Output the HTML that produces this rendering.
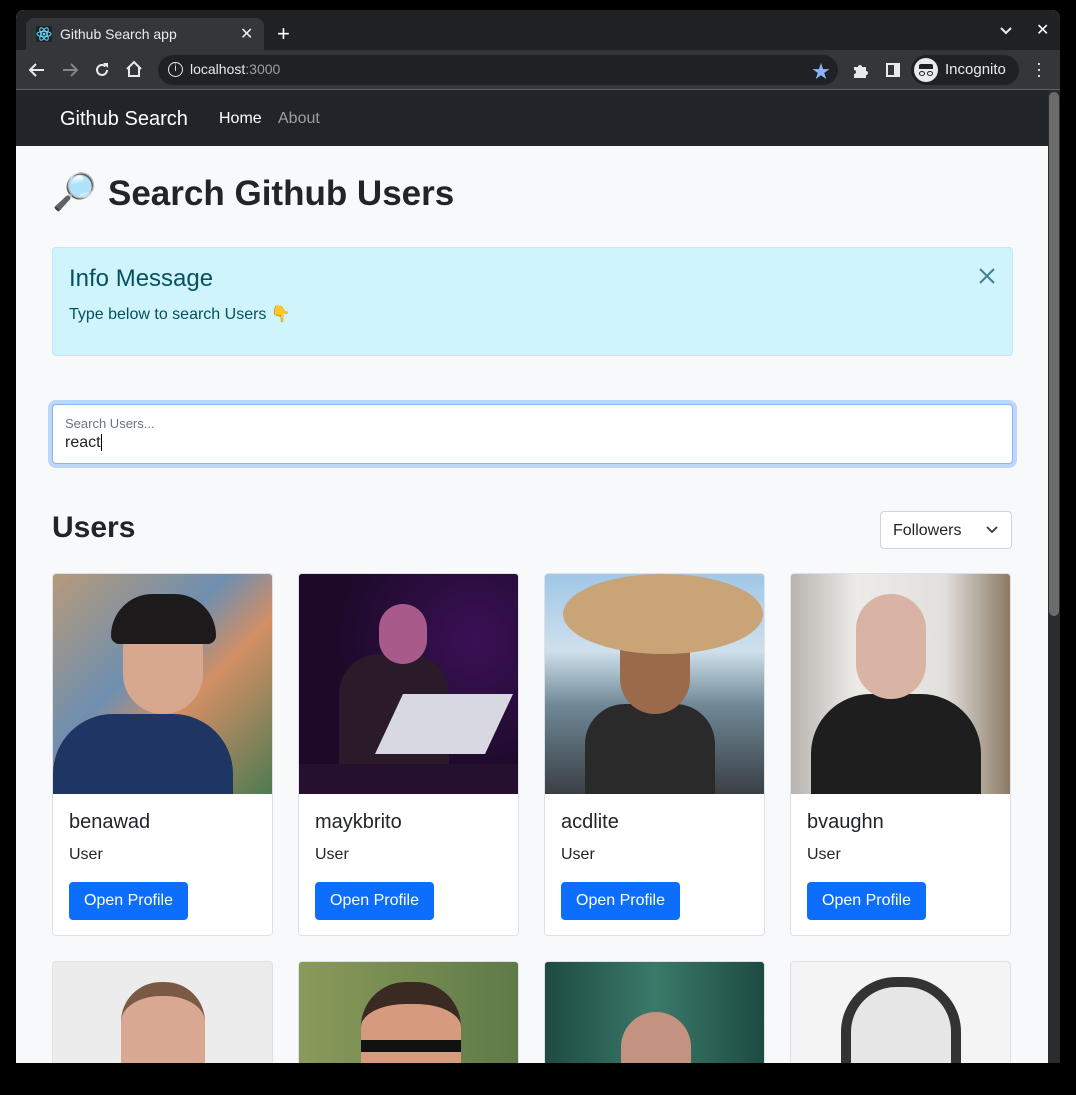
<!DOCTYPE html>
<html><head><meta charset="utf-8"><style>
*{box-sizing:border-box;margin:0;padding:0}
body{width:1076px;height:1095px;background:#000;position:relative;overflow:hidden;font-family:"Liberation Sans","Noto Sans CJK JP",sans-serif}
.a{position:absolute}
.win{left:16px;top:10px;width:1044px;height:1053px;background:#f8f9fa;border-radius:8px 8px 0 0;overflow:hidden}
.tabbar{left:0;top:0;width:1044px;height:40px;background:#202124}
.tab{left:10px;top:8px;width:238px;height:32px;background:#35363a;border-radius:8px 8px 0 0;color:#e8eaed;font-size:14px}
.tool{left:0;top:40px;width:1044px;height:40px;background:#35363a;border-bottom:1px solid #5f6368}
.url{left:142px;top:5px;width:680px;height:30px;background:#202124;border-radius:15px;color:#e8eaed;font-size:14px}
.nav{left:0;top:80px;width:1032px;height:56px;background:#212529}
.sb{left:1032px;top:80px;width:12px;height:973px;background:#2b2c2e}
.card{width:221px;height:363px;background:#fff;border:1px solid #dee2e6;border-radius:4px;overflow:hidden}
.img{left:0;top:0;width:219px;height:220px;overflow:hidden}
.nm{left:16px;top:237px;font-size:20px;color:#212529}
.ty{left:16px;top:272px;font-size:16px;color:#212529}
.btn{left:16px;top:308px;width:119px;height:38px;background:#0d6efd;border-radius:4px;color:#fff;font-size:16px;text-align:center;line-height:38px}
.card2{width:221px;height:120px;border:1px solid #dee2e6;border-radius:4px 4px 0 0;overflow:hidden}
</style></head><body>
<div class="a win">
 <div class="a tabbar">
  <div class="a tab">
   <svg class="a" style="left:10px;top:8px" width="16" height="16" viewBox="0 0 16 16"><rect width="16" height="16" fill="#20232a"/><g fill="none" stroke="#61dafb" stroke-width="1"><ellipse cx="8" cy="8" rx="7" ry="2.7"/><ellipse cx="8" cy="8" rx="7" ry="2.7" transform="rotate(60 8 8)"/><ellipse cx="8" cy="8" rx="7" ry="2.7" transform="rotate(120 8 8)"/></g><circle cx="8" cy="8" r="1.3" fill="#61dafb"/></svg>
   <div class="a" style="left:34px;top:8px">Github Search app</div>
   <div class="a" style="left:214px;top:6px;font-size:16px">✕</div>
  </div>
  <div class="a" style="left:261px;top:13px;color:#fff;font-size:22px;line-height:22px">+</div>
  <svg class="a" style="left:983px;top:16px" width="14" height="10"><path d="M2 2l5 5 5-5" stroke="#e8eaed" stroke-width="2" fill="none"/></svg>
  <div class="a" style="left:1020px;top:10px;color:#fff;font-size:16px">✕</div>
 </div>
 <div class="a tool">
  <svg class="a" style="left:12px;top:12px" width="18" height="16"><path d="M16 8H3M8 2L2 8l6 6" stroke="#e8eaed" stroke-width="2" fill="none"/></svg>
  <svg class="a" style="left:45px;top:12px" width="18" height="16"><path d="M2 8h13M10 2l6 6-6 6" stroke="#80868b" stroke-width="2" fill="none"/></svg>
  <svg class="a" style="left:77px;top:11px" width="18" height="18"><path d="M14 9a5 5 0 1 1-1.5-3.6" stroke="#e8eaed" stroke-width="2" fill="none"/><path d="M10 2h5v5z" fill="#e8eaed"/></svg>
  <svg class="a" style="left:109px;top:10px" width="18" height="18"><path d="M2 9L9 2l7 7M4 7v9h10V7" stroke="#e8eaed" stroke-width="2" fill="none"/></svg>
  <div class="a url">
   <div class="a" style="left:10px;top:7px;width:15px;height:15px;border:1.5px solid #e8eaed;border-radius:50%;font-size:10px;text-align:center;line-height:12px">i</div>
   <div class="a" style="left:32px;top:6px">localhost<span style="color:#9aa0a6">:3000</span></div>
   <div class="a" style="left:654px;top:3px;color:#8ab4f8;font-size:18px">★</div>
  </div>
  <svg class="a" style="left:836px;top:12px" width="17" height="17"><path d="M2 5h4a2 2 0 1 1 4 0h4v4a2 2 0 1 1 0 4v3H2v-4a2 2 0 1 0 0-4z" fill="#e8eaed"/></svg>
  <div class="a" style="left:870px;top:13px;width:14px;height:14px;border:2px solid #e8eaed;border-right-width:6px"></div>
  <div class="a" style="left:895px;top:5px;width:108px;height:30px;background:#202124;border-radius:15px">
   <div class="a" style="left:3px;top:3px;width:24px;height:24px;background:#e8eaed;border-radius:50%"><div class="a" style="left:5px;top:6px;width:14px;height:5px;background:#202124;border-radius:2px 2px 0 0"></div><div class="a" style="left:5px;top:13px;width:6px;height:5px;border:1.5px solid #202124;border-radius:50%"></div><div class="a" style="left:13px;top:13px;width:6px;height:5px;border:1.5px solid #202124;border-radius:50%"></div></div>
   <div class="a" style="left:34px;top:6px;color:#e8eaed;font-size:15px">Incognito</div>
  </div>
  <div class="a" style="left:1020px;top:10px;color:#e8eaed;font-size:18px;line-height:6px;width:4px">·<br>·<br>·</div>
 </div>
 <div class="a nav">
  <div class="a" style="left:44px;top:18px;color:#fff;font-size:20px">Github Search</div>
  <div class="a" style="left:203px;top:20px;color:#fff;font-size:16px">Home</div>
  <div class="a" style="left:262px;top:20px;color:rgba(255,255,255,.55);font-size:16px">About</div>
 </div>
 <div class="a sb"><div class="a" style="left:1px;top:2px;width:10px;height:524px;background:#6b6b6b;border-radius:5px"></div></div>

 <div class="a" style="left:36px;top:160px;font-size:36px;line-height:44px">🔎</div>
 <div class="a" style="left:92px;top:164px;font-size:35px;font-weight:bold;color:#212529">Search Github Users</div>

 <div class="a" style="left:36px;top:237px;width:961px;height:109px;background:#cff4fc;border:1px solid #b6effb;border-radius:4px">
  <div class="a" style="left:16px;top:17px;font-size:24px;color:#055160">Info Message</div>
  <div class="a" style="left:16px;top:56px;font-size:16px;color:#055160">Type below to search Users 👇</div>
  <svg class="a" style="left:926px;top:20px" width="16" height="16"><path d="M1 1l14 14M15 1L1 15" stroke="#055160" stroke-width="2" opacity=".7"/></svg>
 </div>

 <div class="a" style="left:36px;top:394px;width:961px;height:60px;background:#fff;border:1px solid #86b7fe;border-radius:4px;box-shadow:0 0 0 4px rgba(13,110,253,.25)">
  <div class="a" style="left:12px;top:11px;font-size:13px;color:#6c757d">Search Users...</div>
  <div class="a" style="left:12px;top:29px;font-size:16px;color:#212529">react<span style="border-left:1px solid #000"></span></div>
 </div>

 <div class="a" style="left:36px;top:501px;font-size:30px;font-weight:bold;color:#212529">Users</div>
 <div class="a" style="left:864px;top:501px;width:132px;height:38px;background:#fff;border:1px solid #ced4da;border-radius:4px">
  <div class="a" style="left:12px;top:10px;font-size:16px;color:#212529">Followers</div>
  <svg class="a" style="left:105px;top:14px" width="12" height="8"><path d="M1 1l5 5 5-5" stroke="#343a40" stroke-width="1.8" fill="none"/></svg>
 </div>

 <div class="a card" style="left:36px;top:563px">
  <div class="a img" style="background:linear-gradient(135deg,#b79a7a,#6f8fb0 40%,#d38f65 60%,#4e7a52)">
   <div class="a" style="left:0;top:140px;width:180px;height:100px;background:#1f3563;border-radius:60px 60px 0 0"></div>
   <div class="a" style="left:70px;top:40px;width:80px;height:100px;background:#d8a88e;border-radius:40px 40px 45px 45px"></div>
   <div class="a" style="left:58px;top:20px;width:105px;height:50px;background:#1c1a1a;border-radius:50px 50px 10px 10px"></div>
  </div>
  <div class="a nm">benawad</div><div class="a ty">User</div><div class="a btn">Open Profile</div>
 </div>
 <div class="a card" style="left:282px;top:563px">
  <div class="a img" style="background:radial-gradient(circle at 80% 30%,#3a1055,#1c0a28 60%),#1c0a28">
   <div class="a" style="left:40px;top:80px;width:110px;height:110px;background:#2a1a2a;border-radius:40px 40px 0 0"></div>
   <div class="a" style="left:80px;top:30px;width:48px;height:60px;background:#a85a8a;border-radius:24px"></div>
   <div class="a" style="left:90px;top:120px;width:110px;height:60px;background:#d8d8e0;transform:skewX(-25deg)"></div>
   <div class="a" style="left:0;top:190px;width:219px;height:30px;background:#25102f"></div>
  </div>
  <div class="a nm">maykbrito</div><div class="a ty">User</div><div class="a btn">Open Profile</div>
 </div>
 <div class="a card" style="left:528px;top:563px">
  <div class="a img" style="background:linear-gradient(#9fc7e8,#cfe0ec 35%,#6f8796 60%,#3a3f44)">
   <div class="a" style="left:40px;top:130px;width:130px;height:90px;background:#2a2a2a;border-radius:40px 40px 0 0"></div>
   <div class="a" style="left:75px;top:40px;width:70px;height:100px;background:#9a6a4a;border-radius:35px"></div>
   <div class="a" style="left:18px;top:0;width:200px;height:80px;background:#c9a477;border-radius:50%"></div>
  </div>
  <div class="a nm">acdlite</div><div class="a ty">User</div><div class="a btn">Open Profile</div>
 </div>
 <div class="a card" style="left:774px;top:563px">
  <div class="a img" style="background:linear-gradient(90deg,#b8b4ae,#ecebe8 30%,#e2e0dc 70%,#8c7a66)">
   <div class="a" style="left:20px;top:120px;width:170px;height:100px;background:#1e1e1e;border-radius:60px 60px 0 0"></div>
   <div class="a" style="left:65px;top:20px;width:70px;height:105px;background:#d9b3a3;border-radius:35px"></div>
  </div>
  <div class="a nm">bvaughn</div><div class="a ty">User</div><div class="a btn">Open Profile</div>
 </div>

 <div class="a card2" style="left:36px;top:951px;background:#ececec"><div class="a" style="left:68px;top:20px;width:84px;height:110px;background:#d8a893;border-radius:40px 40px 0 0;border-top:14px solid #7a5a45"></div></div>
 <div class="a card2" style="left:282px;top:951px;background:linear-gradient(90deg,#8a9a5a,#5e7a48)"><div class="a" style="left:62px;top:20px;width:100px;height:110px;background:#d69a7e;border-radius:45px 45px 0 0;border-top:22px solid #3a2a22"></div><div class="a" style="left:62px;top:78px;width:100px;height:12px;background:#111"></div></div>
 <div class="a card2" style="left:528px;top:951px;background:linear-gradient(90deg,#1e4a42,#3a7a6a 50%,#1e4a42)"><div class="a" style="left:76px;top:50px;width:70px;height:80px;background:#c49280;border-radius:35px 35px 0 0"></div></div>
 <div class="a card2" style="left:774px;top:951px;background:#f4f4f4"><div class="a" style="left:50px;top:15px;width:120px;height:120px;border:10px solid #333;border-radius:55px 55px 0 0;background:#e6e6e6"></div></div>
</div>
</body></html>
